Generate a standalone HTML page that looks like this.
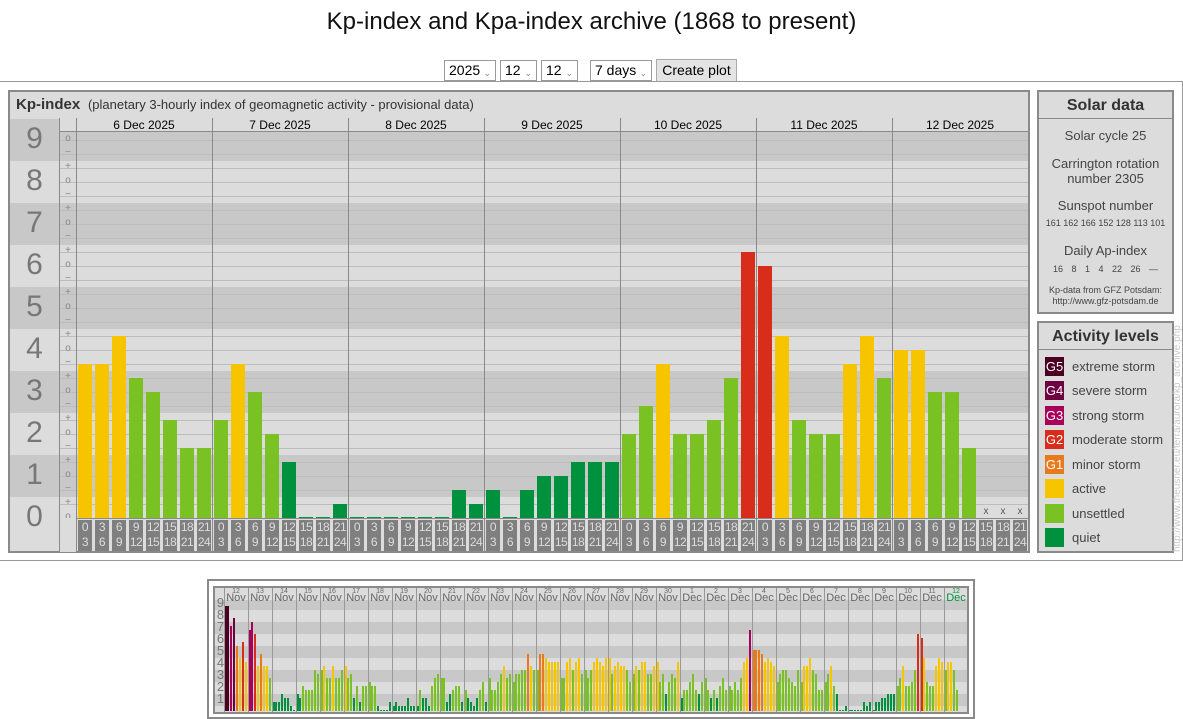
<!DOCTYPE html>
<html><head><meta charset="utf-8">
<style>
*{margin:0;padding:0;box-sizing:border-box}
body{width:1183px;height:719px;position:relative;background:#fff;font-family:"Liberation Sans",Arial,sans-serif;overflow:hidden;color:#333}
.a{position:absolute}
h1{position:absolute;left:0;width:1183px;top:8px;text-align:center;font-weight:normal;font-size:24px;color:#111}
.sel{position:absolute;top:60px;height:21px;border:1px solid #999;background:#fff;font-size:14px;color:#000;padding-left:4px;line-height:19px}
.sel i{position:absolute;right:4px;top:3px;font-style:normal;font-size:9px;color:#888}
.btn{position:absolute;top:59px;left:656px;width:81px;height:23px;border:1px solid #aaa;background:#e4e4e4;font-size:14px;color:#000;text-align:center;line-height:21px}
.box{position:absolute;background:#dcdcdc;border:2px solid #8a8a8a}
.hd{position:absolute;left:0;right:0;top:0;height:27px;border-bottom:1px solid #8a8a8a;font-weight:bold;font-size:16px;color:#333;text-align:center;line-height:27px}
.sd{position:absolute;left:0;right:0;text-align:center;font-size:13px;color:#444}
.lg{position:absolute;left:6px;height:19px;font-size:13px;color:#444;line-height:19px;white-space:nowrap}
.lg b{display:inline-block;width:19px;height:19px;color:#fff;font-weight:normal;font-size:13px;text-align:center;margin-right:8px;vertical-align:top}
</style></head><body>
<h1>Kp-index and Kpa-index archive (1868 to present)</h1>
<div class="sel" style="left:444px;width:52px">2025<i>&#8964;</i></div>
<div class="sel" style="left:500px;width:37px">12<i>&#8964;</i></div>
<div class="sel" style="left:541px;width:37px">12<i>&#8964;</i></div>
<div class="sel" style="left:590px;width:62px">7 days<i>&#8964;</i></div>
<div class="btn">Create plot</div>
<div class="a" style="left:0;top:81px;width:1183px;height:480px;border-top:1px solid #999;border-bottom:1px solid #999;border-right:1px solid #999"></div>

<div class="box" id="main" style="left:8px;top:90px;width:1022px;height:463px">
 <div class="a" style="left:0;right:0;top:0;height:27px;border-bottom:1px solid #8a8a8a;font-size:15px;line-height:26px;padding-left:6px"><b style="color:#333">Kp-index</b> <span style="font-size:13px;color:#333">&nbsp;(planetary 3-hourly index of geomagnetic activity - provisional data)</span></div>
</div>
<div class="a" style="left:60px;top:132px;width:968px;height:386px;overflow:hidden">
 <div class="a" style="left:0;bottom:0;width:968px;height:420px;background:repeating-linear-gradient(to top,#dcdcdc 0px,#dcdcdc 21px,#c8c8c8 21px,#c8c8c8 63px,#dcdcdc 63px,#dcdcdc 84px)"></div>
</div>
<div class="a" style="left:10px;top:118px;width:49px;height:433px;overflow:hidden;background:#dcdcdc">
 <div class="a" style="left:0;top:1px;width:49px;height:378px;background:repeating-linear-gradient(to bottom,#c8c8c8 0px,#c8c8c8 42px,#dcdcdc 42px,#dcdcdc 84px)"></div>
</div>
<div id="chart"></div>

<div class="box" style="left:1037px;top:90px;width:137px;height:224px">
 <div class="hd">Solar data</div>
 <div class="sd" style="top:36px">Solar cycle 25</div>
 <div class="sd" style="top:64px;line-height:15px">Carrington rotation<br>number 2305</div>
 <div class="sd" style="top:106px">Sunspot number</div>
 <div class="sd" style="top:126px;font-size:9px">161 162 166 152 128 113 101</div>
 <div class="sd" style="top:151px">Daily Ap-index</div>
 <div class="sd" style="top:172px;font-size:9px;word-spacing:6px">16 8 1 4 22 26 —</div>
 <div class="sd" style="top:193px;font-size:9px;line-height:11px">Kp-data from GFZ Potsdam:<br>http://www.gfz-potsdam.de</div>
</div>
<div class="box" style="left:1037px;top:321px;width:137px;height:232px">
 <div class="hd">Activity levels</div>
 <div class="lg" style="top:34px"><b style="background:#4b0021">G5</b>extreme storm</div>
 <div class="lg" style="top:58px"><b style="background:#6e0040">G4</b>severe storm</div>
 <div class="lg" style="top:83px"><b style="background:#a8005a">G3</b>strong storm</div>
 <div class="lg" style="top:107px"><b style="background:#d92d1b">G2</b>moderate storm</div>
 <div class="lg" style="top:132px"><b style="background:#e87a1c">G1</b>minor storm</div>
 <div class="lg" style="top:156px"><b style="background:#f6c500"></b>active</div>
 <div class="lg" style="top:181px"><b style="background:#7ac123"></b>unsettled</div>
 <div class="lg" style="top:205px"><b style="background:#00913f"></b>quiet</div>
</div>
<div class="a" style="left:1172px;top:552px;width:230px;height:12px;transform:rotate(-90deg);transform-origin:0 0;font-size:10px;color:#c8c8c8;white-space:nowrap">http://www.theusner.eu/terra/aurora/kp_archive.php</div>

<div class="a" style="left:207px;top:579px;width:768px;height:140px;border:2px solid #8a8a8a;background:#fff"></div>
<div class="a" style="left:213px;top:586px;width:756px;height:128px;border:2px solid #8a8a8a;background:#dcdcdc;overflow:hidden">
 <div class="a" style="left:0;top:12px;width:760px;height:112px;overflow:hidden">
  <div class="a" style="left:0;bottom:0;width:760px;height:130px;background:repeating-linear-gradient(to top,#dcdcdc 0px,#dcdcdc 6px,#c8c8c8 6px,#c8c8c8 18px,#dcdcdc 18px,#dcdcdc 24px)"></div>
 </div>
 <div id="mini"></div>
</div>

<script>
function col(t){
 if(t>=26)return"#4b0021";if(t>=23)return"#6e0040";if(t>=20)return"#a8005a";if(t>=17)return"#d92d1b";if(t>=14)return"#e87a1c";if(t>=11)return"#f6c500";if(t>=5)return"#7ac123";return"#00913f";}
var h='';
function d(x,y,w,hh,st){h+='<div class="a" style="left:'+x+'px;top:'+y+'px;width:'+w+'px;height:'+hh+'px;'+st+'"></div>';}
function tx(x,y,w,s,st){h+='<div class="a" style="left:'+x+'px;top:'+y+'px;width:'+w+'px;text-align:center;'+st+'">'+s+'</div>';}
var B=518;
for(var n=0;n<=9;n++){tx(10,B-42*n-19,49,n,'font-size:30px;line-height:36px;color:#777');}
for(var k=1;k<=27;k++){d(60,B-14*k,968,1,'background:#bdbdbd');}
for(var n=0;n<=9;n++){
 var ys=[[B-42*n+14,'−'],[B-42*n,'o'],[B-42*n-14,'+']];
 for(var j=0;j<3;j++){var y=ys[j][0];if(y>518||y<140)continue;
  tx(60,y-7,16,ys[j][1],'font-size:10px;line-height:12px;color:#888');}
}
d(60,118,968,13,'background:#dcdcdc');
d(60,518,16,34,'background:#dcdcdc');
d(59,118,1,434,'background:#8a8a8a');d(76,118,1,434,'background:#8a8a8a');
d(60,131,968,1,'background:#8a8a8a');
var days=['6 Dec 2025','7 Dec 2025','8 Dec 2025','9 Dec 2025','10 Dec 2025','11 Dec 2025','12 Dec 2025'];
for(var i=0;i<7;i++){tx(76+136*i,118,136,days[i],'font-size:12px;line-height:14px;color:#000');if(i>0)d(76+136*i,118,1,434,'background:#8a8a8a');}
var data=[11,11,13,10,9,7,5,5, 7,11,9,6,4,0,0,1, 0,0,0,0,0,0,2,1, 2,0,2,3,3,4,4,4, 6,8,11,6,6,7,10,19, 18,13,7,6,6,11,13,10, 12,12,9,9,5,-1,-1,-1];
var hrs=['0<br>3','3<br>6','6<br>9','9<br>12','12<br>15','15<br>18','18<br>21','21<br>24'];
d(77,518,951,1,'background:#8a8a8a');
for(var i=0;i<56;i++){var x=77+17*i+1,t=data[i];
 if(t>0)d(x,B-14*t,14,14*t,'background:'+col(t));
 else if(t==0)d(x,517,14,1,'background:#00913f');
 else tx(x,507,14,'x','font-size:10px;line-height:10px;color:#555');
 h+='<div class="a" style="left:'+x+'px;top:520px;width:14px;height:31px;background:#7f7f7f;color:#ddd;font-size:12px;line-height:15px;text-align:center;letter-spacing:-0.5px">'+hrs[i%8]+'</div>';
}
document.getElementById('chart').innerHTML=h;

h='';var OX=215,OY=588,MB=711;
for(var n=1;n<=9;n++){tx(0,MB-12*n-7-OY,11,n,'font-size:13px;line-height:14px;color:#777');}
var md=['12','13','14','15','16','17','18','19','20','21','22','23','24','25','26','27','28','29','30','1','2','3','4','5','6','7','8','9','10','11','12'];
for(var i=0;i<31;i++){var x=224+24*i-OX;d(x,0,1,130,'background:#999');
 var mo=i<19?'Nov':'Dec',cc=i==30?'#00913f':'#666';
 tx(x,0,24,md[i],'font-size:7px;line-height:7px;color:'+cc);
 tx(x,5,24,mo,'font-size:11px;line-height:11px;color:'+cc);}
var px=[96,96,156,132,216,252,204,264, 168,144,180,276,240,276,276,312, 384,384,384,360,372,372,396,408, 360,372,336,348,348,348,288,300, 288,276,312,312,276,312,312,288, 276,312,300,372,336,384,336,336, 324,336,336,396,408,408,408,384, 396,384,396,396,396,372,396,396, 396,348,372,372,396,336,312,300, 312,312,384,360,348,336,336,384, 348,372,384,396,372,348,324,384, 312,348,348,324,300,276,312,300, 324,300,300,288,288,240,276,288, 288,240,240,252,264,264,264,264, 312,312,264,252,288,264,252,300, 288,312,288,264,252,264,276,252, 252,300,276,264,276,276,288,324, 300,276,288,264,264,300,300,276, 264,324,300,360,324,300,312,264, 372,348,348,324,300,348,360,324, 312,348,372,348,372,336,312,348, 336,348,324,348,312,264,252,168, 228,228,228,240,264,252,264,276, 324,300,288,288,312,324,336,288, 324,276,276,252,288,300,348,348, 324,300,276,336,360,408,408,396, 408,408,408,408,408,384,396,384, 408,384,384,372,372,360,360,360, 336,312,276,336,336,324,288,180, 192,252,324,336,336,276,252,264, 288,264,264,288,348];
for(var i=0;i<px.length;i++){var kp=(412-px[i])/36,t=Math.round(kp*3),hh=Math.max(1,Math.round(kp*12));
 var x=224+3*i-OX+(i%8==0?1:0);
 d(x,MB-hh-OY,2,hh,'background:'+col(t));}
document.getElementById('mini').innerHTML=h;
</script>
</body></html>
